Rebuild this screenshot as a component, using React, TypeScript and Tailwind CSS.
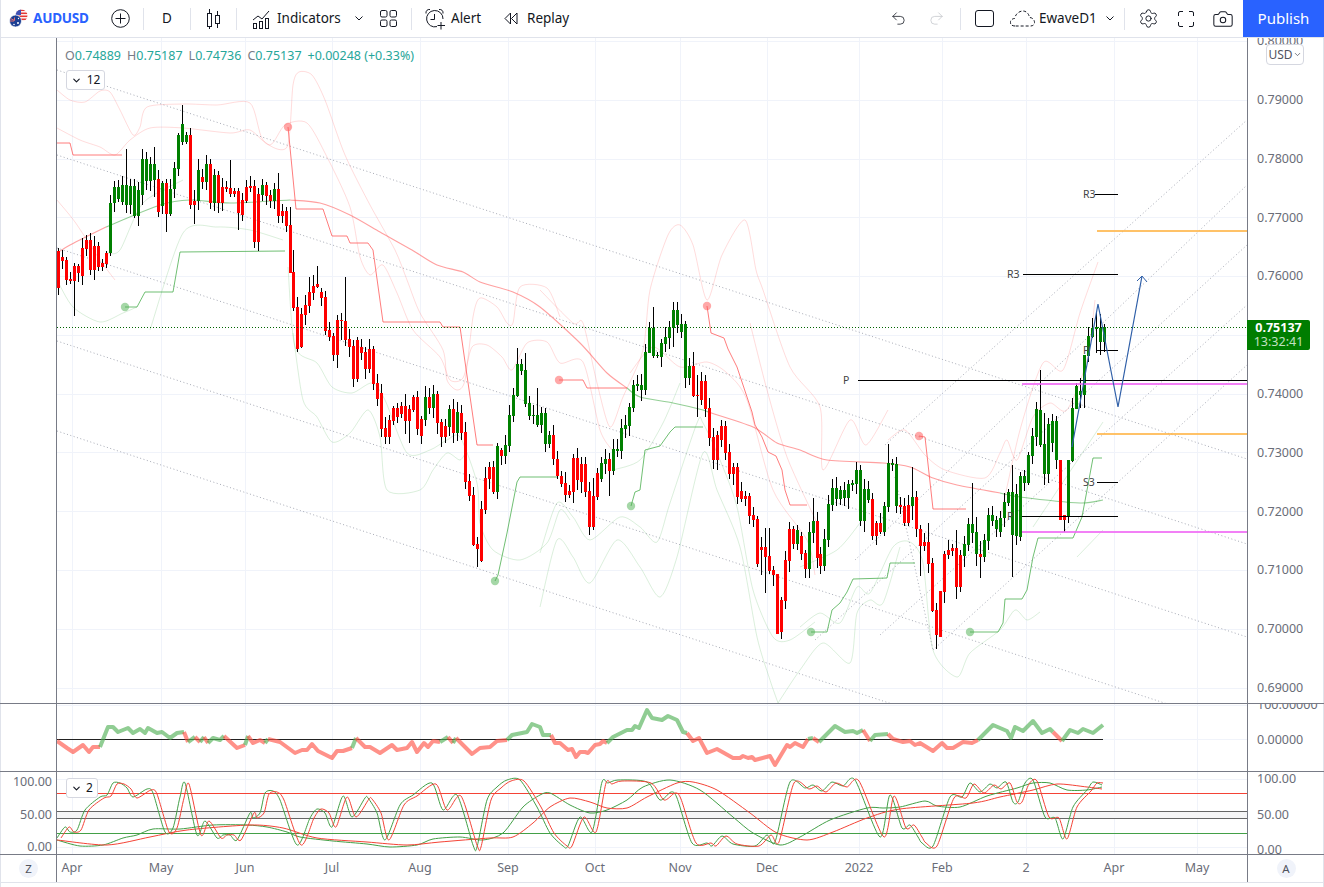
import React from "react";
import { Undo2, Redo2, Settings, Camera, ChevronDown } from "lucide-react";

type Raw = number[];
const S1: Raw[] = [[483,595,0],[501,513,0],[510,570,0],[567,573,0],[528,573,0,520,678],[528,548,0],[474,558,0],[450,476,0],[450,540,0],[468,540,0],[468,530,0],[518,530,0],[490,522,0],[340,490,1,315,497],[291,340,1],[291,327,1],[285,336,1],[285,345,1,178,368],[288,345,1],[288,378,1],[300,378,1],[207,315,1,178,345],[207,272,1],[222,272,1],[222,270,1,172,320],[267,365,0],[279,348,1],[279,372,0,268,425],[297,372,1],[234,298,1],[135,237,1],[102,155,1,45,165],[135,155,1],[135,345,0],[333,345,0,300,402],[240,333,1],[262,276,0],[222,276,1],[222,339,0],[255,339,1],[255,339,0],[291,339,0],[291,297,0],[294,312,0,210,320],[303,312,0],[303,369,0,295,420],[330,375,0],[291,333,0],[288,294,0],[288,456,0,270,475],[312,456,0],[285,315,1],[285,318,0],[315,333,0],[297,333,1],[297,378,0,248,400],[363,378,0],[363,408,0,350,425],[405,549,0,350,549]];
const S2: Raw[] = [[66,174,0,0,183],[171,296,0],[192,292,0,175,295],[165,195,0],[126,168,0,80,190],[108,129,0],[102,111,0,48,114],[126,144,0],[141,243,0],[240,261,0],[258,315,0],[210,315,0,195,354],[210,213,0,190,270],[213,270,0,82,287],[267,291,0],[288,387,0],[270,387,0],[291,309,0],[306,357,0],[297,357,0],[297,402,0],[399,447,0],[429,537,0],[534,561,0],[510,561,0],[474,513,0],[474,501,0],[468,492,0],[468,513,0,432,552],[477,513,0,465,579],[441,480,0],[441,537,0],[507,558,0],[441,510,1],[441,474,0],[432,474,1],[432,520,0],[516,561,0],[528,561,0],[477,531,1],[477,549,0],[486,549,1],[489,549,0],[546,696,0],[693,738,0],[735,885,0,710,888],[882,897,0,860,950],[777,933,0,752,936],[684,780,0],[651,687,0],[651,726,0],[588,726,1,578,747],[600,618,0],[585,618,1],[495,588,1],[435,498,1],[342,438,1,295,442],[342,363,1],[360,462,1,310,470],[459,498,1],[495,498,1],[495,525,1,415,530],[489,525,1],[489,582,1],[555,582,1],[555,627,0],[627,678,0]];
const S3: Raw[] = [[558,582,0],[579,615,0],[603,615,0],[504,606,0],[504,570,0],[522,576,0],[522,606,0],[603,711,0],[618,711,0,565,720],[549,621,0],[519,567,1],[507,522,1],[507,543,0,490,618],[477,543,1],[477,483,1],[414,483,1],[405,417,1],[351,408,1],[285,354,1],[282,288,1],[285,300,1],[186,300,1],[114,189,1,95,190],[114,198,1,52,205],[195,198,1],[159,201,1],[141,162,1],[111,144,1],[60,114,1,36,170],[60,105,1,36,130],[102,126,1],[102,264,1],[228,264,1],[228,318,0,185,320],[315,318,0,255,380],[273,330,0],[273,357,0,255,380],[354,444,0],[441,510,0],[435,510,0],[408,450,0],[408,489,0],[486,552,0],[531,552,0],[531,621,0],[603,627,0],[618,627,0],[618,678,0],[675,690,0],[687,822,0],[771,780,0,740,855],[771,801,0,715,908],[798,843,0,715,852],[840,855,0],[852,1032,0,852,1032],[930,1026,0],[810,933,0],[717,813,0],[717,762,0],[720,762,1],[738,792,0],[789,837,0],[726,837,1],[693,729,1,625,760],[693,804,0]];
const S4: Raw[] = [[402,438,0],[357,438,1],[252,360,1],[204,255,1],[204,237,1],[210,237,1],[210,234,1],[192,234,1],[189,195,1],[150,192,1],[150,303,1],[207,303,1],[207,240,1],[237,348,0],[309,348,0],[309,336,0],[258,336,1],[130,261,1,72,275],[130,135,1],[132,258,1,110,280],[255,261,0],[258,309,0],[255,309,0],[231,258,1,142,300],[231,327,0],[327,378,0,315,468],[366,378,0],[366,432,0,310,458],[429,573,0,415,575],[570,645,0,550,688],[513,651,0,513,651],[402,516,0],[390,405,0],[384,393,0],[384,501,0,330,537],[405,501,0],[372,408,1],[312,375,1],[312,339,1,190,370],[336,402,1,290,438],[402,411,0,362,475],[360,411,1],[285,363,1],[285,303,1],[300,327,1],[294,336,1]];
const S5: Raw[] = [[726,775,1],[696,729,1],[696,825,1,615,950],[702,828,1],[648,830,1],[648,669,1],[585,669,1],[528,588,1],[447,531,1],[450,555,1,330,560],[552,642,1,460,675],[492,642,1],[483,549,1],[483,600,1],[600,780,0,600,780],[765,780,0,765,816],[600,768,1,600,790],[444,603,1,415,606],[378,447,1,370,448],[393,405,1,355,445],[285,405,1,285,445],[228,288,1],[204,231,1,175,235],[201,207,1,160,280],[204,246,1,162,285],[201,246,1,192,275]];

const SECTIONS: { d: Raw[]; x: number; y: number }[] = [
  { d: S1, x: 57.3, y: 90 },
  { d: S2, x: 292.3, y: 250 },
  { d: S3, x: 560.3, y: 290 },
  { d: S4, x: 819.3, y: 420 },
  { d: S5, x: 1002.7, y: 260 },
];

type Bar = { x: number; t: number; b: number; h: number; l: number; up: boolean };
const BARS: Bar[] = [];
SECTIONS.forEach((s) =>
  s.d.forEach((r, i) => {
    const t = r[0] / 3 + s.y;
    const b = r[1] / 3 + s.y;
    const seed = (Math.sin(i * 12.9898 + s.x) * 43758.5453) % 1;
    const k = Math.abs(seed);
    const k2 = Math.abs((seed * 97.13) % 1);
    const h = r.length > 3 ? r[3] / 3 + s.y : t - (2 + k * 9);
    const l = r.length > 3 ? r[4] / 3 + s.y : b + (2 + k2 * 9);
    BARS.push({ x: Math.round(s.x + i * 4), t: Math.round(t), b: Math.round(b), h: Math.round(h), l: Math.round(l), up: r[2] === 1 });
  })
);

function smooth(points: string): string {
  const p = points.split(" ").map((s) => s.split(",").map(Number));
  let d = `M${p[0][0]} ${p[0][1]}`;
  const f = 0.13;
  for (let i = 0; i < p.length - 1; i++) {
    const a = p[Math.max(0, i - 1)];
    const b = p[i];
    const c = p[i + 1];
    const e = p[Math.min(p.length - 1, i + 2)];
    d += ` C${(b[0] + (c[0] - a[0]) * f).toFixed(1)} ${(b[1] + (c[1] - a[1]) * f).toFixed(1)} ${(c[0] - (e[0] - b[0]) * f).toFixed(1)} ${(c[1] - (e[1] - b[1]) * f).toFixed(1)} ${c[0]} ${c[1]}`;
  }
  return d;
}

const PINK = [
  "57,90 70,100 85,102 100,91 110,92 120,110 133,135 140,127 147,107 183,104 217,105 250,103 263,140 287,147 293,85 299,72 312,75 325,100 345,155 370,205 395,250 407,280 420,313 443,350 447,380 457,390 465,380 473,317 480,298 497,307 507,323 513,323 520,287 547,288 560,317",
  "57,128 80,140 100,147 115,155 130,140 150,128 183,128 230,133 250,130 270,145 285,125 307,123 327,157 350,207 360,257 370,275 383,265 397,293 413,330 440,357 450,380 463,378 472,347 487,345 502,357 512,370 527,343 547,342 560,363 583,362 600,430 612,450",
  "540,290 573,323 583,323 597,383 610,427 623,397 643,350 650,290 668,235 680,225 693,245 707,300 722,255 745,220 756,270 763,290 790,367 820,407 823,470 850,420 866,445 888,410",
  "630,373 653,347 680,367 707,362 727,373 747,400 773,490 807,540 815,575",
  "750,323 767,390 787,457 817,523",
  "888,440 905,430 925,455 945,470 985,478 1000,453 1007,440 1017,460 1033,417 1050,403 1067,410 1087,360 1095,300",
  "1000,520 1020,430 1043,363 1063,370 1080,313 1098,262",
  "57,200 75,222 100,260 115,280",
];
const FGREEN = [
  "57,280 73,307 100,322 123,313 137,307",
  "107,253 120,250 143,203 183,180",
  "150,330 183,233 217,227 250,230 283,240",
  "288,267 295,347 317,363 332,387 352,393 372,383 385,400 407,453 430,450 447,440 460,437 477,483 480,523 493,550 520,560 547,543 560,510 570,520",
  "293,333 303,400 317,417 332,442 350,433 368,410 380,437 387,490 420,490 433,470 447,453 460,460 467,450",
  "540,553 557,503 573,517 590,540 620,517 640,527 657,542 670,503 697,423 703,423 720,460 737,507 753,590 773,637 790,640 815,622",
  "540,607 557,540 573,557 590,583 617,540 640,567 660,597 677,557 703,453 717,490 740,547 757,637 770,680 778,703",
  "613,470 640,460 663,423 680,383",
  "800,627 820,613 840,623 857,587 870,593 893,547 910,542 923,563 933,650 957,677 970,653 1000,630 1015,610 1027,620 1040,612",
  "778,703 800,670 823,643 850,663 857,613 870,600 883,603 900,547",
  "800,567 837,550 860,523",
  "1033,527 1103,422",
  "1077,557 1103,530",
];
const RTREND = [
  "57,143 70,143 73,155 122,155",
  "288,127 296,209 323,209 332,236 347,236 350,243 368,243 373,250 383,322 440,322 443,327 460,327 477,445 493,445",
  "559,380 583,380 587,388 627,388",
  "707,306 711,333 724,338 728,349 737,367 740,376 752,412 755,425 762,437 768,452 776,456 782,470 785,490 790,505 807,505",
  "919,436 925,437 933,509 966,509",
];
const GTREND = [
  "125,307 137,307 145,292 173,292 180,252 285,251",
  "495,581 498,575 507,533 517,482 520,477 557,477",
  "631,506 635,492 640,490 645,450 660,446 670,432 675,427 703,427",
  "811,632 827,632 832,610 840,603 847,592 853,579 887,578 890,563 915,563",
  "970,632 998,632 1003,623 1005,599 1022,599 1027,590 1033,557 1038,538 1073,538 1082,517 1093,458 1102,458",
];
const MA_RED = [
  "57,253 70,245 106,227",
  "290,200 320,203 350,215 380,232 412,250 437,265 463,272 480,282 513,292 540,307 580,343 607,373 627,388",
  "708,412 753,427 777,443 800,450 827,460 883,463 910,467 933,478 957,485 1000,493",
];
const MA_GREEN = ["106,227 160,205 190,200 230,203 290,200", "627,388 640,397 673,403 703,410 708,412", "1000,493 1020,497 1080,503 1103,500"];
const DOTS: [number, number, string][] = [
  [288, 127, "#ff5252"], [559, 380, "#ff5252"], [707, 306, "#ff5252"], [919, 436, "#ff5252"],
  [125, 307, "#4caf50"], [495, 581, "#4caf50"], [631, 506, "#4caf50"], [811, 632, "#4caf50"], [970, 632, "#4caf50"],
];
const GRID_X = [72, 161, 245, 332, 420, 508, 595, 680, 767, 859, 942, 1026, 1114, 1197];
const PRICES = ["0.80000", "0.79000", "0.78000", "0.77000", "0.76000", "0.75000", "0.74000", "0.73000", "0.72000", "0.71000", "0.70000", "0.69000"];
const PRICE_Y = [41, 100, 159, 217, 276, 335, 394, 452, 511, 570, 629, 688];
const DOWN_CHAN = [70, 155, 248, 341, 431];
const UP_CHAN: [number, number, number][] = [
  [885, 445, 120], [855, 560, 185], [815, 640, 245], [880, 635, 305], [933, 650, 365],
];
const LEVELS: [number, number, number, string, number][] = [
  [1095, 1118, 194, "#000", 1], [1023, 1118, 274, "#000", 1], [1097, 1247, 231, "#ffb74d", 2], [1097, 1247, 434, "#ffb74d", 2],
  [858, 1247, 380, "#000", 1], [1022, 1247, 384, "#f06af5", 2], [1022, 1247, 532, "#f06af5", 2], [1022, 1118, 516, "#000", 1],
  [1097, 1118, 482, "#000", 1], [1097, 1118, 350, "#000", 1],
];
const CHART_LABELS: [number, number, string][] = [
  [1083, 198, "R3"], [1007, 278, "R3"], [843, 384, "P"], [1007, 520, "P"], [1083, 486, "S3"], [1083, 354, "P"],
];

const OSC: [string, string][] = [
  ["r", "57,741 67,748 73,752 83,745 89,752 93,747 100,747"],
  ["g", "100,747 108,727 113,727 118,732 128,728 133,733 140,729 145,733 148,728 157,733 162,732 170,738 177,733 184,732"],
  ["r", "184,732 188,742"], ["g", "188,742 195,737"], ["r", "195,737 200,742"], ["g", "200,742 204,737"], ["r", "204,737 208,743"],
  ["g", "208,743 213,738 220,740 224,736"], ["r", "224,736 237,748 245,745"], ["g", "245,745 248,736"], ["r", "248,736 253,743 260,740 265,743"],
  ["g", "265,743 268,739"],
  ["r", "268,739 280,742 295,753 302,750 307,750 312,744 318,751 332,758 337,751 343,751 352,748"],
  ["g", "352,748 356,738"],
  ["r", "356,738 365,747 370,747 380,753 392,745 397,750 407,748 412,742 417,752 424,743 428,747 433,741 440,742"],
  ["g", "440,742 448,737"], ["r", "448,737 453,743"], ["g", "453,743 456,738"],
  ["r", "456,738 472,754 480,748 490,747 497,741 507,740"],
  ["g", "507,740 512,735 527,732 532,724 540,727 543,735 551,735"],
  ["r", "551,735 555,743 560,743 568,750 572,749 576,757 580,752 585,752 588,753 595,745 600,744 603,741 607,743"],
  ["g", "607,743 613,737 627,730 632,730 635,726 639,728 647,710 652,718 662,720 668,716 677,720 683,732 687,733"],
  ["r", "687,733 693,741 699,738 707,753 717,749 733,758 740,758 743,756 748,758 752,757 755,760 770,756 775,765 787,745 790,747 795,743 803,747 808,739"],
  ["g", "808,739 813,738"], ["r", "813,738 819,742"],
  ["g", "819,742 835,726 845,732 853,731 857,733 863,730"], ["r", "863,730 870,741"], ["g", "870,741 875,735 888,734"],
  ["r", "888,734 893,739 903,742 910,741 915,745 920,743 933,751 942,743 947,748 953,748 963,742 972,743 978,740"],
  ["g", "978,740 993,725 1007,731 1011,738 1015,727 1023,731 1033,721 1042,733 1050,729 1053,732"],
  ["r", "1053,732 1062,741"], ["g", "1062,741 1070,730 1078,733 1083,729 1093,733 1103,725"],
];

const FAST = "57,838 65,827 70,832 77,830 85,810 100,797 107,795 113,783 120,783 127,788 133,797 147,789 153,793 165,832 173,828 180,797 185,783 197,835 205,821 217,838 223,835 230,835 237,840 250,813 253,818 260,813 265,793 273,791 280,800 297,845 310,818 317,809 325,813 332,827 343,796 352,817 365,798 368,798 377,813 385,840 400,805 413,795 432,783 443,810 457,795 473,845 477,847 487,800 497,787 507,780 520,780 537,807 550,833 563,846 568,846 580,817 592,832 602,782 608,783 618,780 647,782 660,800 671,792 677,798 692,843 707,843 712,846 722,836 733,844 755,846 767,835 775,842 790,782 805,788 813,785 822,791 832,782 843,786 855,780 880,837 890,795 902,828 910,825 918,837 922,843 933,846 950,797 962,797 970,783 980,792 990,784 997,788 1006,782 1013,802 1018,802 1025,783 1033,780 1045,817 1055,818 1063,839 1073,807 1087,790 1093,782 1102,785";
const SLOW_G = "57,840 80,846 103,845 123,838 137,835 153,829 180,829 213,825 247,825 267,827 287,832 300,837 333,841 367,844 390,847 417,845 433,839 460,837 483,840 503,833 523,807 540,795 550,793 570,805 590,813 607,810 627,800 643,787 670,780 700,790 733,817 753,833 780,845 800,837 830,820 867,808 883,808 900,807 925,801 937,806 960,807 987,796 1017,788 1033,783 1050,783 1067,790 1087,790 1102,787";
const SLOW_R = "57,840 107,845 150,837 187,830 250,825 283,828 317,838 367,842 407,845 440,842 490,838 513,837 533,823 550,807 570,798 590,802 607,808 627,808 647,797 677,783 693,782 717,790 750,813 777,833 807,840 833,832 867,818 900,809 973,803 1000,797 1033,790 1057,784 1087,787 1102,789";
const FAST_R = FAST.split(" ")
  .map((p) => {
    const [x, y] = p.split(",").map(Number);
    return [x + 4, y + (y < 800 ? 1 : 0)] as [number, number];
  })
  .filter((p) => p[0] <= 1103)
  .map((p) => p.join(","))
  .join(" ") + " 1103,783";

const TIME = [["Apr", 72], ["May", 161], ["Jun", 245], ["Jul", 332], ["Aug", 420], ["Sep", 508], ["Oct", 595], ["Nov", 680], ["Dec", 767], ["2022", 859], ["Feb", 942], ["2", 1026], ["Apr", 1114], ["May", 1197]] as [string, number][];

function GridLines({ ys }: { ys: number[] }) {
  return (
    <g stroke="#f0f3fa" strokeWidth="1" shapeRendering="crispEdges">
      {GRID_X.map((x) => <line key={x} x1={x + 0.5} x2={x + 0.5} y1="0" y2="900" />)}
      {ys.map((y) => <line key={y} x1="57" x2="1247" y1={y + 0.5} y2={y + 0.5} />)}
    </g>
  );
}

function Sep({ ml }: { ml: string }) {
  return <div className={`${ml} w-px h-[22px] bg-[#e0e3eb] shrink-0`} />;
}

function AudFlag() {
  return (
    <svg width="19" height="19" viewBox="0 0 19 19" className="shrink-0">
      <defs><clipPath id="us"><circle cx="12.5" cy="6.5" r="6" /></clipPath></defs>
      <g clipPath="url(#us)">
        <rect x="5" y="0" width="15" height="14" fill="#fff" />
        <rect x="5" y="0.5" width="15" height="1.6" fill="#e53935" />
        <rect x="5" y="3.5" width="15" height="1.6" fill="#e53935" />
        <rect x="5" y="6.5" width="15" height="1.6" fill="#e53935" />
        <rect x="5" y="9.5" width="15" height="1.6" fill="#e53935" />
        <rect x="6" y="0" width="6" height="6" fill="#3f51b5" />
      </g>
      <circle cx="6.5" cy="12" r="6" fill="#1c3f94" stroke="#fff" strokeWidth="0.7" />
      <path d="M1.5 9.5l4 2M5.5 8.5v3M1 12h4" stroke="#e57373" strokeWidth="1" />
      <circle cx="9" cy="14" r="1" fill="#fff" />
      <circle cx="5" cy="15.5" r="0.8" fill="#fff" />
      <circle cx="9.5" cy="9.5" r="0.7" fill="#fff" />
    </svg>
  );
}

export default function App() {
  return (
    <div className="w-[1324px] h-[887px] overflow-hidden bg-white text-[#131722] font-['Noto_Sans','Liberation_Sans',sans-serif] shadow-[inset_1px_0_0_#e0e3eb,inset_-1px_0_0_#e0e3eb]">
      <header className="h-[38px] flex items-center border-b border-[#e0e3eb] text-[13.5px] leading-none">
        <div className="ml-[9px]"><AudFlag /></div>
        <span className="ml-[5px] w-[53px] font-bold text-[#2962ff] text-[13.5px] tracking-[-0.2px] whitespace-nowrap">AUDUSD</span>
        <svg className="ml-[25px] shrink-0" width="19" height="19" viewBox="0 0 19 19" fill="none" stroke="#131722"><circle cx="9.5" cy="9.5" r="8.8" /><path d="M9.5 4.5v10M4.5 9.5h10" /></svg>
        <Sep ml="ml-[13px]" />
        <span className="w-[46px] text-center">D</span>
        <Sep ml="ml-0" />
        <svg className="ml-[15px] shrink-0" width="15" height="22" viewBox="0 0 15 22" fill="none" stroke="#131722"><rect x="1.5" y="5.5" width="4" height="13" /><path d="M3.5 1v4.5M3.5 18.5V21" /><rect x="9.5" y="7.5" width="4" height="8" /><path d="M11.5 3v4.5M11.5 15.5V20" /></svg>
        <Sep ml="ml-[15px]" />
        <svg className="ml-[15px] shrink-0" width="19" height="20" viewBox="0 0 19 20" fill="none" stroke="#131722"><path d="M1 11l5-4 4 3 7-8" /><rect x="1.5" y="14.5" width="3" height="5" /><rect x="7.5" y="12.5" width="3" height="7" /><rect x="13.5" y="9.5" width="3" height="10" /></svg>
        <span className="ml-[6px] w-[63px] whitespace-nowrap">Indicators</span>
        <svg className="ml-[15px] shrink-0" width="8" height="5" viewBox="0 0 8 5" fill="none" stroke="#131722"><path d="M0.5 0.5L4 4l3.5-3.5" /></svg>
        <svg className="ml-[17px] shrink-0" width="17" height="17" viewBox="0 0 17 17" fill="none" stroke="#131722"><rect x="0.5" y="0.5" width="6.5" height="6.5" rx="1.5" /><rect x="10" y="0.5" width="6.5" height="6.5" rx="1.5" /><rect x="0.5" y="10" width="6.5" height="6.5" rx="1.5" /><rect x="10" y="10" width="6.5" height="6.5" rx="1.5" /></svg>
        <Sep ml="ml-[14px]" />
        <svg className="ml-[13px] shrink-0" width="21" height="22" viewBox="0 0 21 22" fill="none" stroke="#131722"><path d="M12 18.6A8.2 8.2 0 1 1 18 11" /><path d="M9.5 6v5.5H5.5" /><path d="M1 5.5C0.5 3 2.5 1 5 1.5M14 1.5c2.5-.5 4.500 1.500 4 4" /><path d="M16 14v7.500M12.500 17.500h7.500" /></svg>
        <span className="ml-[5px] w-[30px]">Alert</span>
        <svg className="ml-[23px] shrink-0" width="14" height="13" viewBox="0 0 14 13" fill="none" stroke="#131722"><path d="M6.500 1L1 6.500 6.500 12zM13 1L7.500 6.500 13 12z" /></svg>
        <span className="ml-[9px] w-[41px]">Replay</span>
        <Undo2 className="ml-auto shrink-0" size={17} strokeWidth={1.1} color="#131722" />
        <Redo2 className="ml-[21px] shrink-0" size={17} strokeWidth={1.1} color="#c4c6cc" />
        <Sep ml="ml-[15px]" />
        <div className="ml-[14px] w-[19px] h-[17px] border border-[#131722] rounded-[3px] shrink-0" />
        <svg className="ml-[16px] shrink-0" width="25" height="17" viewBox="0 0 25 17" fill="none" stroke="#131722" strokeDasharray="3 2"><path d="M5 16C1.500 16 0 14 0.500 11.500 1 9.500 3 8.500 4.500 8.500 6 3 10 1 13 1c3.500 0 6 3 6.500 6.500 2.500 0 5 2 5 5 0 2-1.500 3.500-4 3.500z" /></svg>
        <span className="ml-[4px] w-[54px] whitespace-nowrap">EwaveD1</span>
        <svg className="ml-[13px] shrink-0" width="8" height="5" viewBox="0 0 8 5" fill="none" stroke="#131722"><path d="M0.500 0.500L4 4l3.500-3.500" /></svg>
        <Sep ml="ml-[10px]" />
        <Settings className="ml-[13px] shrink-0" size={21} strokeWidth={1.1} color="#131722" />
        <svg className="ml-[19px] shrink-0" width="16" height="16" viewBox="0 0 16 16" fill="none" stroke="#131722"><path d="M0.500 5V2a1.500 1.500 0 0 1 1.500-1.500h3M11 0.500h3A1.500 1.500 0 0 1 15.500 2v3M15.500 11v3a1.500 1.500 0 0 1-1.500 1.500h-3M5 15.500H2A1.500 1.500 0 0 1 0.500 14v-3" /></svg>
        <Camera className="ml-[18px] shrink-0" size={22} strokeWidth={1.1} color="#131722" />
        <button className="ml-[9px] w-[81px] h-full bg-[#2962ff] text-white text-[15px] shrink-0">Publish</button>
      </header>

      {/* main pane */}
      <div className="relative h-[665px] flex">
        <div className="w-[57px] shrink-0 border-r border-[#787b86]" />
        <svg className="w-[1190px] h-[665px] shrink-0 block" viewBox="57 38 1190 665">
          <GridLines ys={PRICE_Y} />
          <g fill="none" strokeWidth="1">
            {PINK.map((p, i) => <path key={i} d={smooth(p)} stroke="#ff5252" strokeOpacity="0.2" />)}
            {FGREEN.map((p, i) => <path key={i} d={smooth(p)} stroke="#4caf50" strokeOpacity="0.2" />)}
            {DOWN_CHAN.map((y) => <line key={y} x1="57" y1={y} x2="1247" y2={y + 389} stroke="#a8abb6" strokeDasharray="1 2.500" />)}
            {UP_CHAN.map(([x, y, e]) => <line key={e} x1={x} y1={y} x2="1247" y2={e} stroke="#a8abb6" strokeDasharray="1 2.500" />)}
            <line x1="895" y1="477" x2="933" y2="650" stroke="#a8abb6" strokeDasharray="1 2.500" />
            {MA_RED.map((p, i) => <path key={i} d={smooth(p)} stroke="#ff5252" strokeOpacity="0.55" strokeWidth="1.100" />)}
            {MA_GREEN.map((p, i) => <path key={i} d={smooth(p)} stroke="#4caf50" strokeOpacity="0.6" strokeWidth="1.100" />)}
            {RTREND.map((p, i) => <polyline key={i} points={p} stroke="#ff5252" strokeOpacity="0.75" strokeWidth="1" />)}
            {GTREND.map((p, i) => <polyline key={i} points={p} stroke="#4caf50" strokeOpacity="0.8" strokeWidth="1" />)}
          </g>
          {DOTS.map(([x, y, c]) => <circle key={x} cx={x} cy={y} r="4.200" fill={c} fillOpacity="0.5" />)}
          <g shapeRendering="crispEdges">
            {BARS.map((b, i) => (
              <g key={i}>
                <line x1={b.x + 1.5} x2={b.x + 1.5} y1={b.h} y2={b.l} stroke="#000" />
                <rect x={b.x} y={b.t} width="3" height={Math.max(1, b.b - b.t)} fill={b.up ? "#008000" : "#ff0000"} />
              </g>
            ))}
            {LEVELS.map(([a, c, y, col, w], i) => <line key={i} x1={a} x2={c} y1={w === 2 ? y : y + 0.5} y2={w === 2 ? y : y + 0.5} stroke={col} strokeWidth={w} strokeOpacity={w === 2 ? 0.85 : 1} />)}
          </g>
          <line x1="57" x2="1247" y1="327.500" y2="327.500" stroke="#006400" strokeDasharray="1 2" />
          <polyline points="1072,447 1098,304 1118,407 1142,276" fill="none" stroke="#2f5fa8" strokeWidth="1.200" />
          <polyline points="1137,281 1142,276 1147,282" fill="none" stroke="#2f5fa8" strokeWidth="1" />
          {CHART_LABELS.map(([x, y, t], i) => <text key={i} x={x} y={y} fontSize="10.500" fill="#444" fontFamily="Noto Sans, sans-serif">{t}</text>)}
        </svg>
        <div className="w-[77px] shrink-0 border-l border-[#787b86] overflow-hidden text-[12.500px] leading-none text-[#6a6d78]">
          <div className="-mt-[26px] flex flex-col">
            {PRICES.map((p) => <div key={p} className="h-[58.800px] flex items-center pl-[9px]">{p}</div>)}
          </div>
        </div>
        {/* overlays */}
        <div className="absolute left-[65px] top-[11px] flex gap-[6px] text-[12.500px] leading-[14px] text-[#26a69a] whitespace-nowrap">
          <span><span className="text-[#787b86]">O</span>0.74889</span>
          <span><span className="text-[#787b86]">H</span>0.75187</span>
          <span><span className="text-[#787b86]">L</span>0.74736</span>
          <span><span className="text-[#787b86]">C</span>0.75137</span>
          <span>+0.00248 (+0.33%)</span>
        </div>
        <div className="absolute left-[66px] top-[32px] w-[39px] h-[20px] flex items-center justify-center gap-[5px] bg-white border border-[#d5d7e0] rounded-[3px] text-[12px] leading-none">
          <ChevronDown size={11} strokeWidth={2.500} /> 12
        </div>
        <div className="absolute left-[1266px] top-[6px] w-[38px] h-[21px] flex items-center justify-center bg-white border border-[#d5d7e0] rounded-[4px] text-[12px] leading-none text-[#50535e]">
          USD<ChevronDown size={9} strokeWidth={2} />
        </div>
        <div className="absolute left-[1247px] top-[282px] w-[63px] h-[30px] bg-[#007d00] rounded-r-[2px] flex flex-col items-center justify-center leading-[14px]">
          <span className="text-white font-bold text-[12.500px]">0.75137</span>
          <span className="text-[#c0e0c0] text-[12.500px]">13:32:41</span>
        </div>
      </div>

      {/* oscillator pane */}
      <div className="h-[68px] flex border-t border-[#787b86]">
        <div className="w-[57px] shrink-0 border-r border-[#787b86]" />
        <svg className="w-[1190px] h-[67px] shrink-0 block" viewBox="57 704 1190 67">
          <GridLines ys={[705, 739]} />
          <line x1="57" x2="1103" y1="739.500" y2="739.500" stroke="#222" strokeWidth="1" shapeRendering="crispEdges" />
          {OSC.map(([c, p], i) => <polyline key={i} points={p} fill="none" strokeWidth="4" strokeOpacity="0.62" strokeLinejoin="round" stroke={c === "g" ? "#4caf50" : "#ff4d40"} />)}
        </svg>
        <div className="w-[77px] shrink-0 border-l border-[#787b86] overflow-hidden text-[12.500px] leading-none text-[#6a6d78] flex flex-col">
          <div className="h-[2px] pl-[9px] mt-[0px] flex items-center">100.00000</div>
          <div className="mt-[27.500px] pl-[9px]">0.00000</div>
        </div>
      </div>

      {/* stochastic pane */}
      <div className="relative h-[83px] flex border-t border-[#787b86]">
        <div className="w-[57px] shrink-0 border-r border-[#787b86] flex flex-col items-end pr-[4px] text-[12.500px] leading-none text-[#6a6d78]">
          <div className="mt-[4px]">100.00</div>
          <div className="mt-[20px]">50.00</div>
          <div className="mt-[20px]">0.00</div>
        </div>
        <svg className="w-[1190px] h-[82px] shrink-0 block" viewBox="57 772 1190 82">
          <GridLines ys={[779, 847]} />
          <rect x="57" y="811" width="1190" height="8" fill="#f5f5f6" />
          <g shapeRendering="crispEdges" strokeWidth="1">
            <line x1="57" x2="1247" y1="793.500" y2="793.500" stroke="#f44336" />
            <line x1="57" x2="1247" y1="811.500" y2="811.500" stroke="#666" />
            <line x1="57" x2="1247" y1="818.500" y2="818.500" stroke="#666" />
            <line x1="57" x2="1247" y1="833.500" y2="833.500" stroke="#43a047" />
          </g>
          <g fill="none" strokeWidth="1">
            <path d={smooth(SLOW_G)} stroke="#43a047" />
            <path d={smooth(SLOW_R)} stroke="#f44336" />
            <path d={smooth(FAST)} stroke="#43a047" />
            <path d={smooth(FAST_R)} stroke="#f44336" />
          </g>
        </svg>
        <div className="w-[77px] shrink-0 border-l border-[#787b86] overflow-hidden text-[12.500px] leading-none text-[#6a6d78] pl-[9px]">
          <div className="mt-[1px]">100.00</div>
          <div className="mt-[23px]">50.00</div>
          <div className="mt-[23px]">0.00</div>
        </div>
        <div className="absolute left-[66px] top-[6px] w-[32px] h-[20px] flex items-center justify-center gap-[4px] bg-white border border-[#d5d7e0] rounded-[3px] text-[12px] leading-none">
          <ChevronDown size={11} strokeWidth={2.500} /> 2
        </div>
      </div>

      {/* time axis */}
      <div className="h-[28px] flex border-t border-[#787b86] border-b-0">
        <div className="w-[57px] shrink-0 border-r border-[#787b86] flex items-center justify-center pl-[1px]">
          <span className="w-[19px] h-[19px] rounded-full bg-[#f0f3fa] text-[11.500px] text-[#50535e] flex items-center justify-center">Z</span>
        </div>
        <div className="w-[1190px] shrink-0 flex items-center text-[12.500px] text-[#6a6d78]">
          {TIME.map(([t, x], i) => (
            <span key={i} className="w-0 flex justify-center whitespace-nowrap" style={{ marginLeft: i === 0 ? x - 57 : x - TIME[i - 1][1] }}>{t}</span>
          ))}
        </div>
        <div className="w-[77px] shrink-0 border-l border-[#787b86] flex items-center justify-center">
          <span className="w-[19px] h-[19px] rounded-full bg-[#f0f3fa] text-[11.500px] text-[#50535e] flex items-center justify-center">A</span>
        </div>
      </div>
      <div className="h-px bg-[#e0e3eb]" />
    </div>
  );
}
